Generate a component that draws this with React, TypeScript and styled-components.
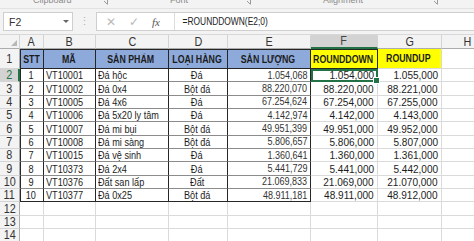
import styled, { createGlobalStyle } from "styled-components";

type Align = "left" | "center" | "right";

const GlobalStyle = createGlobalStyle`
  html, body {
    margin: 0;
    padding: 0;
    background: #fff;
  }
  body {
    font-family: "Liberation Sans", Arial, sans-serif;
  }
`;

const Frame = styled.div`
  width: 474px;
  height: 241px;
  overflow: hidden;
  background: #fff;
  display: flex;
  flex-direction: column;
`;

const Ribbon = styled.div`
  height: 8px;
  flex: none;
  display: flex;
  background: #f3f3f3;
  overflow: hidden;
  border-bottom: 1px solid #e2e2e2;
`;

const RibbonGroup = styled.div<{ $w: number; $pad: number }>`
  width: ${p => p.$w}px;
  flex: none;
  box-sizing: border-box;
  padding: 0 4px 0 ${p => p.$pad}px;
  display: flex;
  align-items: flex-end;
  justify-content: space-between;
  font-size: 9px;
  line-height: 9px;
  color: #8c8c8c;

  span {
    margin-bottom: 3px;
  }
  svg {
    margin-bottom: 3px;
  }
`;

const FormulaBar = styled.div`
  height: 26px;
  flex: none;
  display: flex;
  align-items: center;
  padding-left: 3px;
  background: #f3f3f3;
  border-bottom: 1px solid #d8d8d8;
  box-sizing: border-box;
`;

const NameBox = styled.div`
  width: 70px;
  height: 19px;
  box-sizing: border-box;
  background: #fff;
  border: 1px solid #cfcfcf;
  display: flex;
  align-items: center;
  justify-content: space-between;
  padding: 0 3px 0 5px;
  font-size: 10.5px;
  color: #333;
`;

const Caret = styled.span`
  width: 0;
  height: 0;
  border-left: 3px solid transparent;
  border-right: 3px solid transparent;
  border-top: 3px solid #666;
`;

const Grip = styled.div`
  width: 23px;
  display: flex;
  justify-content: center;
  color: #b4b4b4;
  font-size: 11px;
`;

const FormulaField = styled.div`
  flex: 1;
  height: 19px;
  box-sizing: border-box;
  background: #fff;
  border: 1px solid #cfcfcf;
  border-right: none;
  display: flex;
  align-items: center;
`;

const FxButtons = styled.div`
  width: 78px;
  height: 100%;
  flex: none;
  display: flex;
  align-items: center;
  padding-left: 9px;
  gap: 13px;
  box-sizing: border-box;
  border-right: 1px solid #dcdcdc;
  color: #b9b9b9;
  font-size: 12px;
`;

const Fx = styled.span`
  font-family: "Liberation Serif", serif;
  font-style: italic;
  font-size: 11px;
  color: #555;
`;

const FormulaText = styled.span`
  padding-left: 9px;
  font-size: 10px;
  color: #222;
  display: inline-block;
  transform: scaleX(0.84);
  transform-origin: left center;
  white-space: nowrap;
`;

const Sheet = styled.div`
  display: grid;
  grid-template-columns: 20px 24px 52px 73px 59px 83px 67px 64px 52px;
  grid-template-rows: 14px 20px repeat(13, 13.35px);
  flex: none;
`;

const Corner = styled.div`
  background: #f3f3f3;
  border-right: 1px solid #d4d4d4;
  border-bottom: 1px solid #acacac;
  box-sizing: border-box;
  display: flex;
  align-items: flex-end;
  justify-content: flex-end;
  padding: 0 2px 2px 0;
`;

const Tri = styled.span`
  width: 0;
  height: 0;
  border-left: 6px solid transparent;
  border-bottom: 6px solid #b8b8b8;
`;

const ColHead = styled.div<{ $active?: boolean }>`
  box-sizing: border-box;
  background: ${p => (p.$active ? "#d3d3d3" : "#f3f3f3")};
  border-right: 1px solid #d4d4d4;
  border-bottom: ${p => (p.$active ? "2px solid #217346" : "1px solid #acacac")};
  display: flex;
  align-items: center;
  justify-content: center;
  font-size: 12px;
  color: ${p => (p.$active ? "#444" : "#333")};
  overflow: hidden;
`;

const RowHead = styled.div<{ $active?: boolean }>`
  box-sizing: border-box;
  background: ${p => (p.$active ? "#d3d3d3" : "#f3f3f3")};
  border-bottom: 1px solid #d4d4d4;
  border-right: ${p => (p.$active ? "2px solid #217346" : "1px solid #acacac")};
  display: flex;
  align-items: center;
  justify-content: center;
  font-size: 12px;
  color: ${p => (p.$active ? "#217346" : "#333")};
  overflow: hidden;
`;

const Cell = styled.div<{
  $align?: Align;
  $bg?: string;
  $table?: boolean;
  $first?: boolean;
  $top?: boolean;
  $last?: boolean;
  $boxed?: boolean;
  $selected?: boolean;
}>`
  position: relative;
  box-sizing: border-box;
  display: flex;
  align-items: center;
  justify-content: ${p =>
    p.$align === "right" ? "flex-end" : p.$align === "center" ? "center" : "flex-start"};
  padding: 0 ${p => (p.$align === "right" ? 3 : 2)}px 0 ${p => (p.$align === "left" ? 2 : 0)}px;
  background: ${p => p.$bg ?? "#fff"};
  border-right: 1px solid ${p => (p.$table || p.$boxed ? "#262626" : "#dadada")};
  border-bottom: 1px solid
    ${p => (p.$top || p.$last || p.$boxed ? "#262626" : p.$table ? "#8c8c8c" : "#dadada")};
  border-left: ${p => (p.$first ? "1px solid #262626" : "none")};
  border-top: ${p => (p.$top || p.$boxed ? "1px solid #262626" : "none")};
  outline: ${p => (p.$selected ? "2px solid #217346" : "none")};
  outline-offset: -2px;
  z-index: ${p => (p.$selected ? 2 : "auto")};
  color: #1c1c1c;
  white-space: nowrap;
`;

const FillHandle = styled.span`
  position: absolute;
  right: -3px;
  bottom: -3px;
  width: 5px;
  height: 5px;
  background: #217346;
  border: 1px solid #fff;
`;

const Txt = styled.span<{ $align?: Align; $size: number; $sx: number; $bold?: boolean }>`
  display: inline-block;
  font-size: ${p => p.$size}px;
  font-weight: ${p => (p.$bold ? 700 : 400)};
  transform: scaleX(${p => p.$sx});
  transform-origin: ${p => p.$align ?? "left"} center;
`;

const Launcher = () => (
  <svg width="6" height="6" viewBox="0 0 6 6">
    <path d="M0.5 0.5H5.5V5.5M2 2L5 5" fill="none" stroke="#9a9a9a" strokeWidth="1" />
  </svg>
);

const letters = ["A", "B", "C", "D", "E", "F", "G", "H"];
const heads = ["STT", "MÃ", "SẢN PHẨM", "LOẠI HÀNG", "SẢN LƯỢNG"];

const rows: [string, string, string, string, string, string, string][] = [
  ["1", "VT10001", "Đá hộc", "Đá", "1.054,068", "1.054,000", "1.055,000"],
  ["2", "VT10002", "Đá 0x4", "Bột đá", "88.220,070", "88.220,000", "88.221,000"],
  ["3", "VT10005", "Đá 4x6", "Đá", "67.254,624", "67.254,000", "67.255,000"],
  ["4", "VT10006", "Đá 5x20 ly tâm", "Đá", "4.142,974", "4.142,000", "4.143,000"],
  ["5", "VT10007", "Đá mi bụi", "Bột đá", "49.951,399", "49.951,000", "49.952,000"],
  ["6", "VT10008", "Đá mi sàng", "Bột đá", "5.806,657", "5.806,000", "5.807,000"],
  ["7", "VT10015", "Đá vệ sinh", "Đá", "1.360,641", "1.360,000", "1.361,000"],
  ["8", "VT10373", "Đá 2x4", "Đá", "5.441,729", "5.441,000", "5.442,000"],
  ["9", "VT10376", "Đất san lấp", "Đất", "21.069,833", "21.069,000", "21.070,000"],
  ["10", "VT10377", "Đá 0x25", "Bột đá", "48.911,181", "48.911,000", "48.912,000"],
];

const tableAlign: Align[] = ["center", "left", "left", "center", "right"];

export default function App() {
  return (
    <Frame>
      <GlobalStyle />
      <Ribbon>
        <RibbonGroup $w={112} $pad={33}>
          <span>Clipboard</span>
          <Launcher />
        </RibbonGroup>
        <RibbonGroup $w={143} $pad={58}>
          <span>Font</span>
          <Launcher />
        </RibbonGroup>
        <RibbonGroup $w={187} $pad={68}>
          <span>Alignment</span>
          <Launcher />
        </RibbonGroup>
      </Ribbon>

      <FormulaBar>
        <NameBox>
          <span>F2</span>
          <Caret />
        </NameBox>
        <Grip>⋮</Grip>
        <FormulaField>
          <FxButtons>
            <span>✕</span>
            <span>✓</span>
            <Fx>fx</Fx>
          </FxButtons>
          <FormulaText>=ROUNDDOWN(E2;0)</FormulaText>
        </FormulaField>
      </FormulaBar>

      <Sheet>
        <Corner>
          <Tri />
        </Corner>
        {letters.map(l => (
          <ColHead key={l} $active={l === "F"}>
            <Txt $align="center" $size={12} $sx={0.9}>{l}</Txt>
          </ColHead>
        ))}

        <RowHead>
          <Txt $align="center" $size={12} $sx={0.9}>1</Txt>
        </RowHead>
        {heads.map((h, i) => (
          <Cell key={h} $align="center" $bg="#8eaadb" $table $top $first={i === 0}>
            <Txt $align="center" $size={10} $sx={0.88} $bold>{h}</Txt>
          </Cell>
        ))}
        <Cell $align="center" $bg="#ffff00" $boxed>
          <Txt $align="center" $size={10} $sx={0.88} $bold>ROUNDDOWN</Txt>
        </Cell>
        <Cell $align="center" $bg="#ffff00">
          <Txt $align="center" $size={10} $sx={0.88} $bold>ROUNDUP</Txt>
        </Cell>
        <Cell />

        {rows.map((r, ri) => {
          const n = ri + 2;
          return [
            <RowHead key={`h${n}`} $active={n === 2}>
              <Txt $align="center" $size={12} $sx={0.9}>{n}</Txt>
            </RowHead>,
            ...r.slice(0, 5).map((v, ci) => (
              <Cell
                key={`${n}-${ci}`}
                $align={tableAlign[ci]}
                $table
                $first={ci === 0}
                $last={n === 11}
              >
                <Txt
                  $align={tableAlign[ci]}
                  $size={ci === 4 ? 10 : 10.5}
                  $sx={ci === 4 ? 0.9 : 0.87}
                  style={ci === 4 ? { color: "#333" } : undefined}
                >
                  {v}
                </Txt>
              </Cell>
            )),
            <Cell key={`${n}-f`} $align="right" $selected={n === 2}>
              <Txt $align="right" $size={11.5} $sx={0.875}>{r[5]}</Txt>
              {n === 2 && <FillHandle />}
            </Cell>,
            <Cell key={`${n}-g`} $align="right">
              <Txt $align="right" $size={11.5} $sx={0.875}>{r[6]}</Txt>
            </Cell>,
            <Cell key={`${n}-h`} />,
          ];
        })}

        {[12, 13, 14].map(n => [
          <RowHead key={`h${n}`}>
            <Txt $align="center" $size={12} $sx={0.9}>{n}</Txt>
          </RowHead>,
          ...letters.map(l => <Cell key={`${n}-${l}`} />),
        ])}
      </Sheet>
    </Frame>
  );
}
